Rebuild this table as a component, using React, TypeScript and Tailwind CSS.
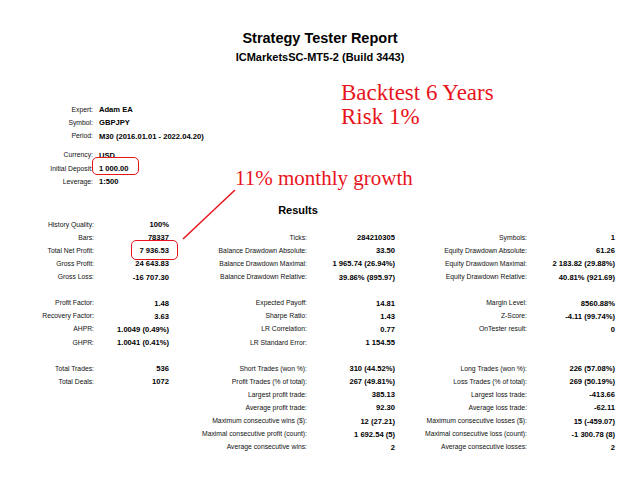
type Cell = [string, string];
type Row = [Cell?, Cell?, Cell?];

const info: Cell[] = [
  ['Expert:', 'Adam EA'],
  ['Symbol:', 'GBPJPY'],
  ['Period:', 'M30 (2016.01.01 - 2022.04.20)'],
];

const account: Cell[] = [
  ['Currency:', 'USD'],
  ['Initial Deposit:', '1 000.00'],
  ['Leverage:', '1:500'],
];

const rows: Row[] = [
  [['History Quality:', '100%']],
  [['Bars:', '78337'], ['Ticks:', '284210305'], ['Symbols:', '1']],
  [['Total Net Profit:', '7 936.53'], ['Balance Drawdown Absolute:', '33.50'], ['Equity Drawdown Absolute:', '61.26']],
  [['Gross Profit:', '24 643.83'], ['Balance Drawdown Maximal:', '1 965.74 (26.94%)'], ['Equity Drawdown Maximal:', '2 183.82 (29.88%)']],
  [['Gross Loss:', '-16 707.30'], ['Balance Drawdown Relative:', '39.86% (895.97)'], ['Equity Drawdown Relative:', '40.81% (921.69)']],
  [],
  [['Profit Factor:', '1.48'], ['Expected Payoff:', '14.81'], ['Margin Level:', '8560.88%']],
  [['Recovery Factor:', '3.63'], ['Sharpe Ratio:', '1.43'], ['Z-Score:', '-4.11 (99.74%)']],
  [['AHPR:', '1.0049 (0.49%)'], ['LR Correlation:', '0.77'], ['OnTester result:', '0']],
  [['GHPR:', '1.0041 (0.41%)'], ['LR Standard Error:', '1 154.55']],
  [],
  [['Total Trades:', '536'], ['Short Trades (won %):', '310 (44.52%)'], ['Long Trades (won %):', '226 (57.08%)']],
  [['Total Deals:', '1072'], ['Profit Trades (% of total):', '267 (49.81%)'], ['Loss Trades (% of total):', '269 (50.19%)']],
  [undefined, ['Largest profit trade:', '385.13'], ['Largest loss trade:', '-413.66']],
  [undefined, ['Average profit trade:', '92.30'], ['Average loss trade:', '-62.11']],
  [undefined, ['Maximum consecutive wins ($):', '12 (27.21)'], ['Maximum consecutive losses ($):', '15 (-459.07)']],
  [undefined, ['Maximal consecutive profit (count):', '1 692.54 (5)'], ['Maximal consecutive loss (count):', '-1 300.78 (8)']],
  [undefined, ['Average consecutive wins:', '2'], ['Average consecutive losses:', '2']],
];

const InfoRow = ({ cell }: { cell: Cell }) => (
  <div className="flex h-[13.3px] items-center">
    <span className="w-[93px] text-right text-[6.8px] text-[#111]">{cell[0]}</span>
    <span className="pl-[6px] text-[7.6px] font-bold">{cell[1]}</span>
  </div>
);

const App = () => {
  return (
    <div className="relative w-[640px] h-[480px] overflow-hidden bg-white text-black font-['Liberation_Sans',Arial,sans-serif]">
      {/* Report header */}
      <div className="mt-[29px] h-[18px] text-center text-[14.5px] font-bold leading-[18px]">
        Strategy Tester Report
      </div>
      <div className="mt-[3px] h-[14px] text-center text-[11px] font-bold leading-[14px]">
        ICMarketsSC-MT5-2 (Build 3443)
      </div>

      {/* Settings */}
      <div className="mt-[39px]">
        {info.map((c) => (
          <InfoRow key={c[0]} cell={c} />
        ))}
      </div>
      <div className="mt-[6px]">
        {account.map((c) => (
          <InfoRow key={c[0]} cell={c} />
        ))}
      </div>

      {/* Results */}
      <div className="mt-[14px] w-[596px] h-[14px] text-center text-[11px] font-bold leading-[14px]">
        Results
      </div>
      <div className="mt-[1.5px] grid grid-cols-[94px_75px_138px_88px_132px_88px] auto-rows-[13.1px] items-center">
        {rows.map((row, i) =>
          [0, 1, 2].map((j) => {
            const cell = row[j];
            return [
              <span key={`${i}-${j}-l`} className="text-right text-[6.8px] text-[#111] whitespace-nowrap">
                {cell ? cell[0] : ''}
              </span>,
              <span key={`${i}-${j}-v`} className="text-right text-[7.6px] font-bold whitespace-nowrap">
                {cell ? cell[1] : ''}
              </span>,
            ];
          })
        )}
      </div>

      {/* Annotations drawn over the report */}
      <div className="absolute left-[341px] top-[80.5px] text-[23px] leading-[24px] text-[#e8141c] font-['Liberation_Serif','Times_New_Roman',serif] whitespace-nowrap">
        <div>Backtest 6 Years</div>
        <div>Risk 1%</div>
      </div>
      <div className="absolute left-[235px] top-[166px] text-[21px] leading-[24px] text-[#e8141c] font-['Liberation_Serif','Times_New_Roman',serif] whitespace-nowrap">
        11% monthly growth
      </div>
      <div className="absolute left-[92px] top-[157px] w-[47px] h-[18px] rounded-[5px] border-[1.5px] border-[#e8141c]" />
      <div className="absolute left-[131px] top-[240px] w-[47px] h-[20px] rounded-[5px] border-[1.5px] border-[#e8141c]" />
      <svg className="absolute left-0 top-0 pointer-events-none" width="640" height="480">
        <line x1="183" y1="239" x2="235" y2="190" stroke="#e8141c" strokeWidth="1.5" />
      </svg>
    </div>
  );
};

export default App;
